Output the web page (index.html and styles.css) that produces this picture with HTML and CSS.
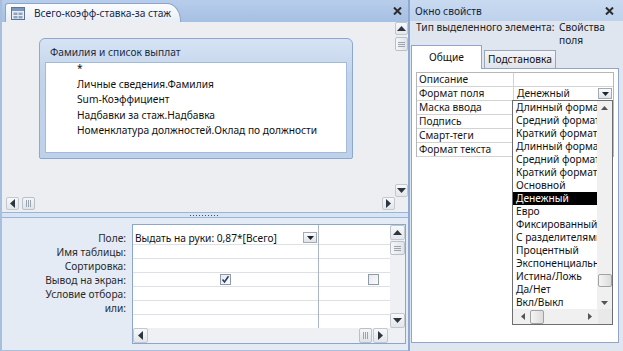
FILE: index.html
```html
<!DOCTYPE html>
<html lang="ru">
<head>
<meta charset="utf-8">
<link rel="stylesheet" href="styles.css">
</head>
<body>
<div class="app">
  <section class="qwin">
    <header class="qtitle">
      <div class="qtab">
        <svg class="qicon" width="14" height="13" viewBox="0 0 14 13">
          <rect x="0.5" y="0.5" width="13" height="12" fill="#e9eef6" stroke="#5f7491"/>
          <rect x="1" y="1" width="12" height="3" fill="#7d97bd"/>
          <rect x="2.5" y="5.5" width="4" height="2.5" fill="#8ea3c0"/>
          <rect x="7.5" y="5.5" width="4" height="2.5" fill="#8ea3c0"/>
          <rect x="2.5" y="9" width="4" height="2.5" fill="#8ea3c0"/>
          <rect x="7.5" y="9" width="4" height="2.5" fill="#8ea3c0"/>
        </svg>
        <span class="qtab-text">Всего-коэфф-ставка-за стаж</span>
      </div>
      <svg class="close" width="9" height="8" viewBox="0 0 9 8"><path d="M1 0.5 L8 7.5 M8 0.5 L1 7.5" stroke="#2b2b2b" stroke-width="2"/></svg>
    </header>

    <div class="upper">
      <div class="canvas">
        <div class="tbl">
          <div class="tbl-head">Фамилия и список выплат</div>
          <ul class="tbl-list">
            <li>*</li>
            <li>Личные сведения.Фамилия</li>
            <li>Sum-Коэффициент</li>
            <li>Надбавки за стаж.Надбавка</li>
            <li>Номенклатура должностей.Оклад по должности</li>
          </ul>
        </div>
      </div>
      <div class="vsb">
        <div class="sbtn"><svg width="9" height="5" viewBox="0 0 9 5"><path d="M0 5 L4.5 0 L9 5Z" fill="#2d3540"/></svg></div>
        <div class="vthumb"><span></span><span></span><span></span></div>
        <div class="fill"></div>
        <div class="sbtn"><svg width="9" height="5" viewBox="0 0 9 5"><path d="M0 0 L4.5 5 L9 0Z" fill="#2d3540"/></svg></div>
      </div>
      <div class="hsb">
        <div class="sbtn"><svg width="5" height="9" viewBox="0 0 5 9"><path d="M5 0 L0 4.5 L5 9Z" fill="#2d3540"/></svg></div>
        <div class="hthumb"><span></span><span></span><span></span></div>
        <div class="fill"></div>
        <div class="sbtn"><svg width="5" height="9" viewBox="0 0 5 9"><path d="M0 0 L5 4.5 L0 9Z" fill="#2d3540"/></svg></div>
      </div>
      <div class="corner"></div>
    </div>

    <div class="splitter"><span class="grip"></span></div>

    <div class="lower">
      <div class="labels">
        <div>Поле:</div>
        <div>Имя таблицы:</div>
        <div>Сортировка:</div>
        <div>Вывод на экран:</div>
        <div>Условие отбора:</div>
        <div>или:</div>
      </div>
      <div class="qgrid">
        <div class="qcols">
          <div class="qcol c1">
            <div class="sel"></div>
            <div class="cell first"><span>Выдать на руки: 0,87*[Всего]</span>
              <span class="ddbtn"><svg width="7" height="5" viewBox="0 0 7 5"><path d="M0 1 L7 1 L3.5 5Z" fill="#1e2630"/></svg></span>
            </div>
            <div class="cell"></div>
            <div class="cell"></div>
            <div class="cell center"><span class="chk on"><svg width="9" height="9" viewBox="0 0 9 9"><path d="M1.5 4.5 L3.5 7 L7.5 1.2" fill="none" stroke="#27406b" stroke-width="1.6"/></svg></span></div>
            <div class="cell"></div>
            <div class="cell"></div>
          </div>
          <div class="qcol c2">
            <div class="sel"></div>
            <div class="cell"></div>
            <div class="cell"></div>
            <div class="cell"></div>
            <div class="cell center"><span class="chk"></span></div>
            <div class="cell"></div>
            <div class="cell"></div>
          </div>
        </div>
        <div class="vsb g">
          <div class="sbtn"><svg width="9" height="5" viewBox="0 0 9 5"><path d="M0 5 L4.5 0 L9 5Z" fill="#2d3540"/></svg></div>
          <div class="vthumb"><span></span><span></span><span></span></div>
          <div class="fill"></div>
          <div class="sbtn"><svg width="9" height="5" viewBox="0 0 9 5"><path d="M0 0 L4.5 5 L9 0Z" fill="#2d3540"/></svg></div>
        </div>
        <div class="hsb g">
          <div class="sbtn"><svg width="5" height="9" viewBox="0 0 5 9"><path d="M5 0 L0 4.5 L5 9Z" fill="#2d3540"/></svg></div>
          <div class="fill"></div>
          <div class="hthumb"><span></span><span></span><span></span></div>
          <div class="sbtn"><svg width="5" height="9" viewBox="0 0 5 9"><path d="M0 0 L5 4.5 L0 9Z" fill="#2d3540"/></svg></div>
        </div>
        <div class="corner g"></div>
      </div>
    </div>
  </section>

  <section class="pwin">
    <header class="ptitle">
      <span>Окно свойств</span>
      <svg class="close" width="9" height="8" viewBox="0 0 9 8"><path d="M1 0.5 L8 7.5 M8 0.5 L1 7.5" stroke="#2b2b2b" stroke-width="2"/></svg>
    </header>
    <div class="pinfo">
      <span class="pk">Тип выделенного элемента:</span>
      <span class="pv">Свойства поля</span>
    </div>
    <div class="ptabs">
      <div class="ptab active">Общие</div>
      <div class="ptab">Подстановка</div>
    </div>
    <div class="panel">
      <div class="props">
        <div class="prow"><span class="pn">Описание</span><span class="pval"></span></div>
        <div class="prow"><span class="pn">Формат поля</span><span class="pval">Денежный<span class="ddbtn p"><svg width="7" height="5" viewBox="0 0 7 5"><path d="M0 1 L7 1 L3.5 5Z" fill="#1e2630"/></svg></span></span></div>
        <div class="prow"><span class="pn">Маска ввода</span><span class="pval"></span></div>
        <div class="prow"><span class="pn">Подпись</span><span class="pval"></span></div>
        <div class="prow"><span class="pn">Смарт-теги</span><span class="pval"></span></div>
        <div class="prow"><span class="pn">Формат текста</span><span class="pval"></span></div>
      </div>

      <div class="dropdown">
        <div class="dd-main">
          <ul class="dd-list">
            <li>Длинный формат даты</li>
            <li>Средний формат даты</li>
            <li>Краткий формат даты</li>
            <li>Длинный формат времени</li>
            <li>Средний формат времени</li>
            <li>Краткий формат времени</li>
            <li>Основной</li>
            <li class="sel-item">Денежный</li>
            <li>Евро</li>
            <li>Фиксированный</li>
            <li>С разделителями разрядов</li>
            <li>Процентный</li>
            <li>Экспоненциальный</li>
            <li>Истина/Ложь</li>
            <li>Да/Нет</li>
            <li>Вкл/Выкл</li>
          </ul>
          <div class="dd-vsb">
            <span class="mini"><svg width="7" height="4" viewBox="0 0 7 4"><path d="M0 4 L3.5 0 L7 4Z" fill="#555"/></svg></span>
            <span class="fill"></span>
            <span class="dthumb"></span>
            <span class="mini"><svg width="7" height="4" viewBox="0 0 7 4"><path d="M0 0 L3.5 4 L7 0Z" fill="#555"/></svg></span>
          </div>
        </div>
        <div class="dd-hsb">
          <span class="mini"><svg width="4" height="7" viewBox="0 0 4 7"><path d="M4 0 L0 3.5 L4 7Z" fill="#555"/></svg></span>
          <span class="dthumb h"></span>
          <span class="fill"></span>
          <span class="mini"><svg width="4" height="7" viewBox="0 0 4 7"><path d="M0 0 L4 3.5 L0 7Z" fill="#555"/></svg></span>
          <span class="dd-corner"></span>
        </div>
      </div>
    </div>
  </section>
</div>
</body>
</html>
```

FILE: styles.css
```css
* { box-sizing: border-box; margin: 0; padding: 0; }
html, body { width: 623px; height: 351px; overflow: hidden; }
body {
  font-family: "Noto Sans", "Open Sans", sans-serif;
  font-size: 10.2px;
  color: #161616;
  background: #c5d7ee;
}
ul { list-style: none; }

.app { display: flex; height: 351px; }

/* ---------- query window ---------- */
.qwin {
  width: 409px;
  display: flex;
  flex-direction: column;
  border-left: 2px solid #a7bedd;
  border-right: 1px solid #8ea9cf;
}
.qtitle {
  height: 22px;
  flex: none;
  display: flex;
  align-items: flex-end;
  justify-content: space-between;
  padding: 0 6px 0 3px;
  background: linear-gradient(#b7cdea, #a6c0e3);
}
.qtab {
  height: 19px;
  width: 176px;
  display: flex;
  align-items: center;
  gap: 9px;
  padding-left: 5px;
  background: linear-gradient(#fbfcfe, #e9eef4);
  border: 1px solid #8ba6cb;
  border-bottom: none;
  border-radius: 3px 14px 0 0 / 3px 18px 0 0;
}
.qtab-text { color: #14284a; white-space: nowrap; }
.qtitle .close { align-self: center; }

.upper {
  height: 190px;
  flex: none;
  display: grid;
  grid-template-columns: 1fr 13px;
  grid-template-rows: 175px 13px;
  background: #eceef1;
  padding-bottom: 2px;
}
.canvas { padding: 16px 0 0 37px; overflow: hidden; }
.tbl {
  width: 314px;
  height: 121px;
  border: 1px solid #8ca8cf;
  border-radius: 6px 6px 2px 2px;
  background: linear-gradient(#d6e3f3, #c2d4ec 30%, #bed1ea);
  padding: 0 5px 5px 5px;
  display: flex;
  flex-direction: column;
}
.tbl-head { height: 23px; line-height: 27px; padding-left: 5px; color: #1c2a40; flex: none; }
.tbl-list {
  flex: 1;
  background: #fff;
  border: 1px solid #a3bad9;
  padding-left: 31px;
  line-height: 15.5px;
  color: #111;
}
.tbl-list li:first-child { margin-top: -2px; }

.vsb { display: flex; flex-direction: column; background: #eceef1; }
.hsb { display: flex; background: #eceef1; }
.fill { flex: 1; }
.sbtn {
  width: 13px; height: 13px; flex: none;
  display: flex; align-items: center; justify-content: center;
  background: linear-gradient(#f7f8fa, #e3e6ea);
  border: 1px solid #c3c8cf;
  border-radius: 2px;
}
.vthumb {
  height: 14px; margin-top: 2px; flex: none;
  background: linear-gradient(90deg, #f5f6f8, #dfe3e8);
  border: 1px solid #b9c0c9; border-radius: 2px;
  display: flex; flex-direction: column; justify-content: center; align-items: center; gap: 1px;
}
.vthumb span { width: 7px; height: 1px; background: #9aa4b1; }
.hthumb {
  width: 13px; margin-left: 3px; flex: none;
  background: linear-gradient(#f5f6f8, #dfe3e8);
  border: 1px solid #b9c0c9; border-radius: 2px;
  display: flex; justify-content: center; align-items: center; gap: 1px;
}
.hthumb span { width: 1px; height: 7px; background: #9aa4b1; }
.upper .hsb { padding-left: 4px; }
.corner { background: #eceef1; }

.splitter {
  height: 6px;
  flex: none;
  background: #d8e4f3;
  border-top: 1px solid #9ab4d8;
  border-bottom: 1px solid #9ab4d8;
  display: flex;
  justify-content: center;
  align-items: center;
}
.grip {
  width: 30px; height: 1px;
  background: repeating-linear-gradient(90deg, #3c4f6a 0 1px, transparent 1px 3px);
}

.lower {
  flex: 1;
  display: flex;
  background: #e4ebf5;
  padding: 6px 0 6px 0;
  border-bottom: 1px solid #a9bfdd;
}
.labels {
  width: 130px;
  padding: 7px 6px 0 0;
  text-align: right;
  color: #2a2a2a;
}
.labels div { height: 14px; line-height: 14px; white-space: nowrap; }

.qgrid {
  width: 274px;
  display: grid;
  grid-template-columns: 1fr 15px;
  grid-template-rows: 1fr 15px;
  border: 1px solid #8ca6c9;
  background: #fff;
}
.qcols { display: flex; overflow: hidden; }
.qcol { flex: none; }
.qcol.c1 { width: 186px; border-right: 1px solid #aab6c6; }
.qcol.c2 { width: 108px; }
.sel { height: 6px; }
.cell {
  height: 14px;
  border-bottom: 1px solid #dde1e7;
  display: flex;
  align-items: center;
  padding-left: 2px;
  white-space: nowrap;
}
.cell.first { justify-content: space-between; padding-right: 1px; color: #111; }
.cell.center { justify-content: center; padding-left: 0; }
.ddbtn {
  width: 14px; height: 11px;
  display: flex; align-items: center; justify-content: center;
  background: linear-gradient(#fafbfc, #dfe3e8);
  border: 1px solid #a3aab4;
}
.chk {
  width: 11px; height: 11px;
  border: 1px solid #8f9aa6;
  background: linear-gradient(135deg, #e6e9ee, #fbfbfc);
  display: flex; align-items: center; justify-content: center;
}
.qgrid .vsb, .qgrid .hsb, .qgrid .corner { background: #eef0f3; }
.qgrid .sbtn { width: 15px; height: 15px; }
.qgrid .vsb .vthumb { margin-top: 1px; }
.qgrid .hsb .hthumb { margin-left: 0; margin-right: 1px; }
.qgrid .hsb { padding-right: 2px; }

/* ---------- property window ---------- */
.pwin {
  flex: 1;
  display: flex;
  flex-direction: column;
  background: #dfe6f0;
  border-left: 1px solid #91aacd;
}
.ptitle {
  height: 21px;
  flex: none;
  display: flex;
  align-items: center;
  justify-content: space-between;
  padding: 0 9px 0 5px;
  background: linear-gradient(#c9daf0, #bed2ec);
  color: #15243c;
}
.pinfo {
  height: 24px;
  flex: none;
  display: flex;
  padding-left: 6px;
  line-height: 13px;
  color: #222;
}
.pk { width: 143px; flex: none; white-space: nowrap; }
.pv { width: 56px; }
.ptabs {
  height: 23px;
  flex: none;
  display: flex;
  align-items: flex-end;
  padding-left: 1px;
  gap: 2px;
  position: relative;
  z-index: 1;
}
.ptab {
  height: 18px;
  padding: 0 3px;
  line-height: 17px;
  background: linear-gradient(#f3f5f8, #dfe4ea);
  border: 1px solid #98a7ba;
  border-bottom: none;
  color: #111;
}
.ptab.active {
  height: 24px;
  width: 71px;
  text-align: center;
  line-height: 22px;
  background: #fff;
  border-color: #8ea6c7;
  margin-bottom: -1px;
}
.panel {
  flex: 1;
  margin: 0 4px 8px 1px;
  background: #fff;
  border: 1px solid #8ea6c7;
  padding: 3px 4px;
  position: relative;
}
.props {
  width: 198px;
  border: 1px solid #b7b7b7;
  border-bottom: none;
}
.prow {
  height: 14px;
  display: flex;
  border-bottom: 1px solid #d3d3d3;
  line-height: 13px;
}
.pn {
  width: 97px;
  flex: none;
  padding-left: 2px;
  border-right: 1px solid #d3d3d3;
  white-space: nowrap;
}
.pval {
  flex: 1;
  padding-left: 3px;
  display: flex;
  align-items: center;
  justify-content: space-between;
  padding-right: 1px;
}
.ddbtn.p { width: 14px; height: 11px; }

.dropdown {
  position: absolute;
  left: 100px;
  top: 31px;
  width: 101px;
  height: 225px;
  background: #fff;
  border: 1px solid #6e6e6e;
  display: flex;
  flex-direction: column;
  z-index: 5;
}
.dd-main { flex: 1; display: flex; overflow: hidden; }
.dd-list { width: 84px; flex: none; overflow: hidden; line-height: 13px; }
.dd-list li { padding-left: 3px; white-space: nowrap; overflow: hidden; color: #111; }
.dd-list li.sel-item { background: #000; color: #fff; }
.dd-vsb {
  flex: 1;
  display: flex;
  flex-direction: column;
  align-items: center;
  background: #f0f0f0;
}
.mini { width: 14px; height: 13px; display: flex; align-items: center; justify-content: center; flex: none; }
.dthumb {
  width: 14px; height: 13px; flex: none;
  background: linear-gradient(90deg, #f4f4f4, #dcdcdc);
  border: 1px solid #a2a2a2;
  border-radius: 2px;
}
.dd-vsb .dthumb { margin-bottom: 9px; }
.dd-hsb {
  height: 15px;
  flex: none;
  display: flex;
  align-items: center;
  background: #f0f0f0;
  padding-left: 4px;
}
.dd-hsb .mini { width: 12px; }
.dthumb.h { width: 14px; height: 14px; margin-left: 1px; }
.dd-corner { width: 14px; height: 15px; background: #e9e9e9; margin-left: 2px; }
```
